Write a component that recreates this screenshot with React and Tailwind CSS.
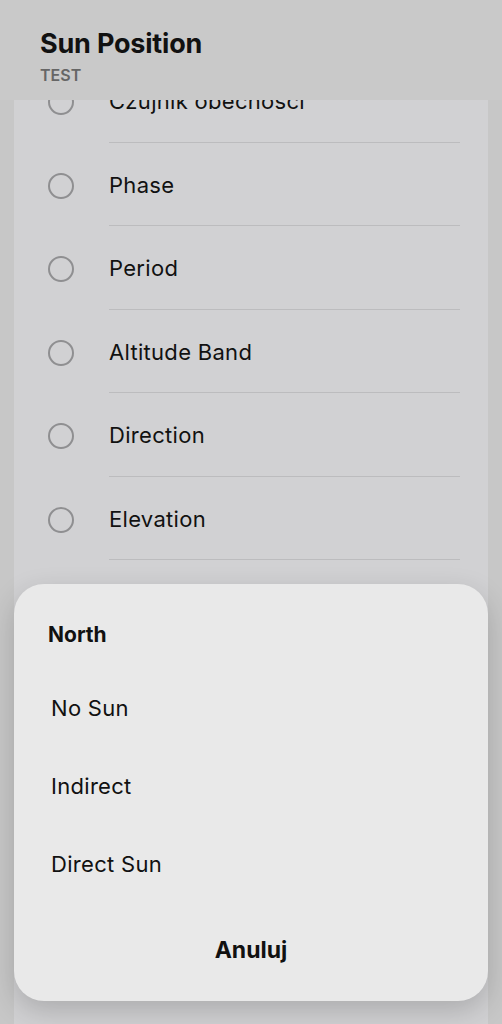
const rows = ['Czujnik obecności', 'Phase', 'Period', 'Altitude Band', 'Direction', 'Elevation', 'Azimuth', 'Sunrise'];
const options = ['No Sun', 'Indirect', 'Direct Sun'];

function Row({ label }) {
  return (
    <div className="flex h-[83.5px] items-stretch">
      <div className="flex w-[95px] items-center pl-[34px] pt-[3px]">
        <span className="h-[26px] w-[26px] rounded-full border-2 border-[#8f8f91]" />
      </div>
      <div className="mr-[28px] flex flex-1 items-center border-b border-[#bcbcbe] pt-[3px] text-[22px] tracking-[0.3px] text-[#111]">
        {label}
      </div>
    </div>
  );
}

export default function App() {
  return (
    <div
      className="relative h-[1024px] w-[502px] overflow-hidden bg-[#c7c7c7]"
      style={{ fontFamily: 'Inter, "Noto Sans", sans-serif' }}
    >
      {/* Header */}
      <div className="h-[100px] bg-[#c9c9c9] pl-[40px] pt-[27px]">
        <div className="text-[27px] font-bold leading-[34px] tracking-[-0.2px] text-[#111]">Sun Position</div>
        <div className="mt-[4px] text-[16px] font-semibold leading-[20px] text-[#666]">TEST</div>
      </div>

      {/* List */}
      <div className="mx-[14px] h-[924px] overflow-hidden bg-[#d1d1d3]">
        <div className="-mt-[41px]">
          {rows.map((r) => (
            <Row key={r} label={r} />
          ))}
        </div>
      </div>

      {/* Bottom sheet */}
      <div className="absolute bottom-[23px] left-[14px] right-[14px] flex h-[417px] flex-col rounded-[30px] bg-[#e9e9e9] shadow-[0_10px_28px_rgba(0,0,0,0.18)]">
        <div className="pl-[34px] pt-[38px] text-[21px] font-bold leading-[26px] text-[#111]">North</div>
        <div className="mt-[21px] flex flex-col">
          {options.map((o) => (
            <div key={o} className="flex h-[78px] items-center pl-[37px] text-[22px] tracking-[0.3px] text-[#111]">
              {o}
            </div>
          ))}
        </div>
        <div className="mt-[17px] flex h-[60px] items-center justify-center text-[23px] font-bold text-[#111]">
          Anuluj
        </div>
      </div>
    </div>
  );
}
